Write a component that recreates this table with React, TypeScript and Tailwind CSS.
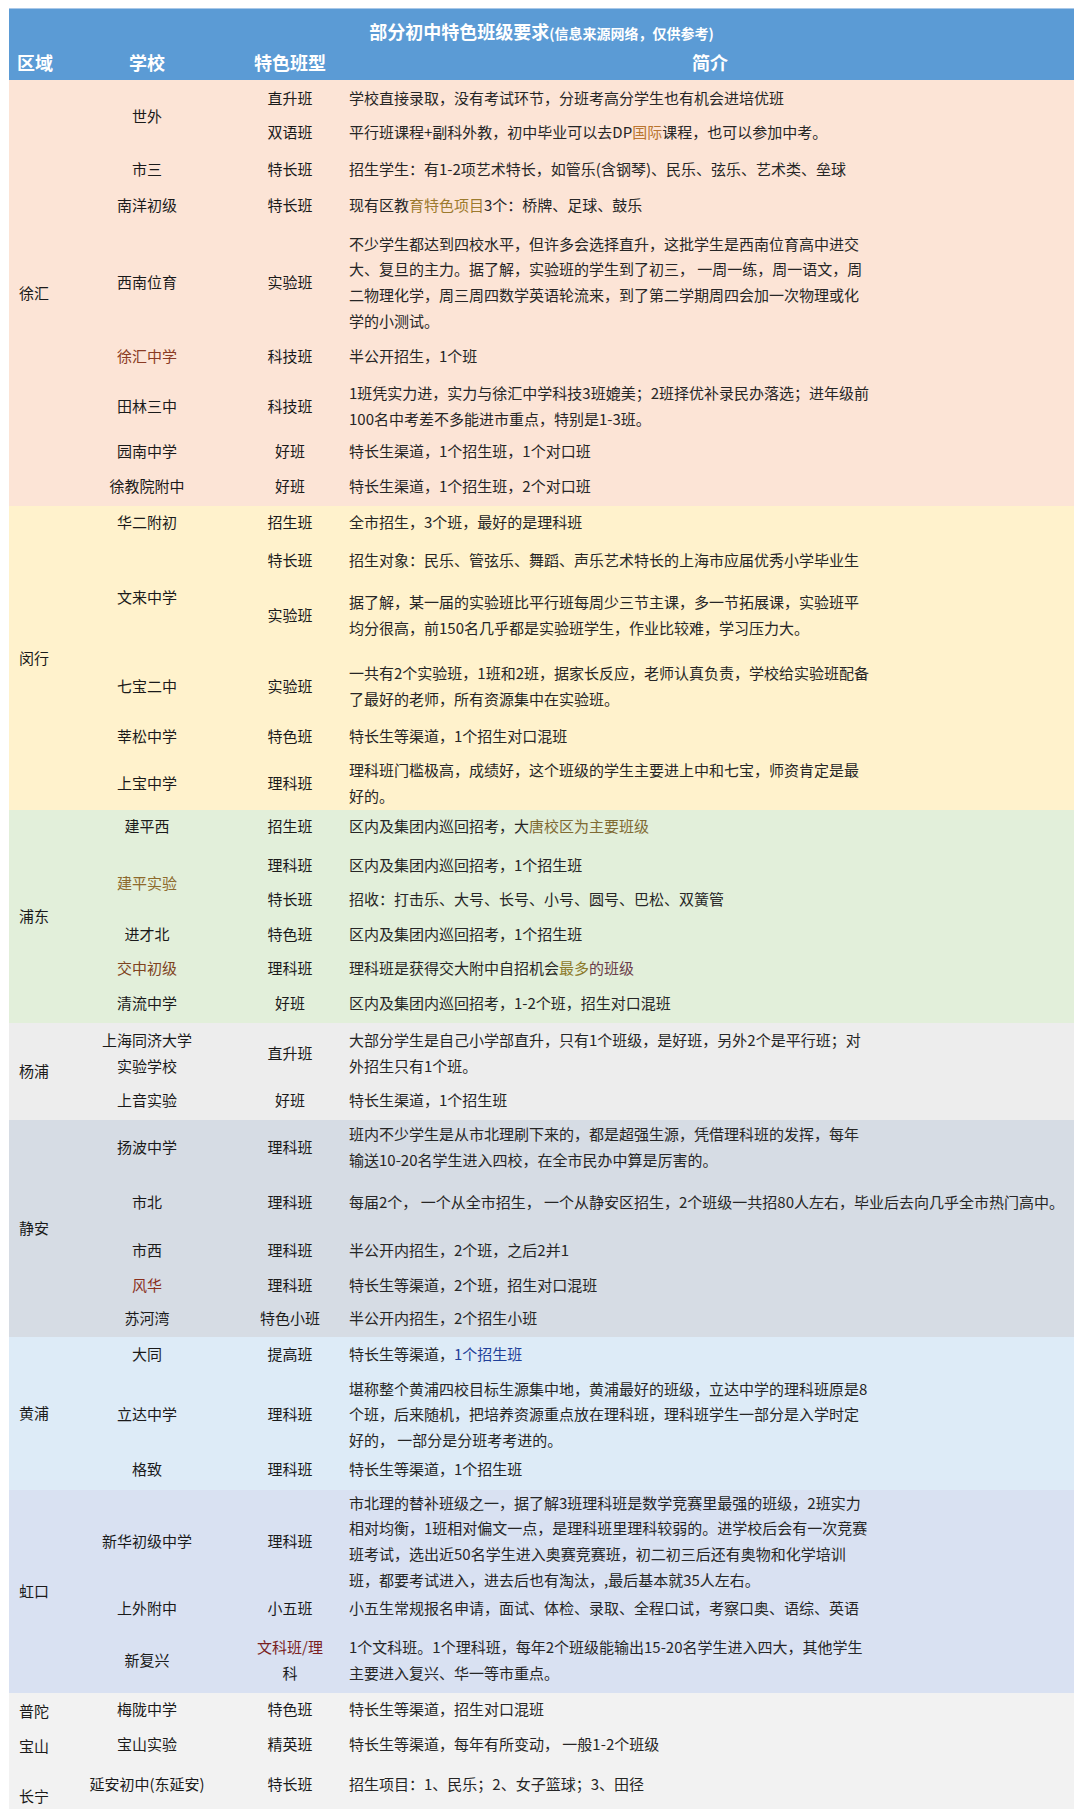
import React from "react";

type Seg = string | { t: string; c: string };
type Line = Seg[];

interface Row {
  h: string;
  s?: { n: string[]; span: number; c?: string };
  t: { n: string[]; c?: string; lines?: Line[] };
  x: Line[];
}

interface Section {
  d: string;
  bg: string;
  dcls?: string;
  rows: Row[];
}

const L = (...segs: Seg[]): Line => segs;

const sections: Section[] = [
  {
    d: "徐汇",
    bg: "bg-[#fce4d6]",
    rows: [
      { h: "h-[36px]", s: { n: ["世外"], span: 2 }, t: { n: ["直升班"] }, x: [L("学校直接录取，没有考试环节，分班考高分学生也有机会进培优班")] },
      { h: "h-[37px]", t: { n: ["双语班"] }, x: [L("平行班课程+副科外教，初中毕业可以去DP", { t: "国际", c: "text-[#b8742f]" }, "课程，也可以参加中考。")] },
      { h: "h-[36px]", s: { n: ["市三"], span: 1 }, t: { n: ["特长班"] }, x: [L("招生学生：有1-2项艺术特长，如管乐(含钢琴)、民乐、弦乐、艺术类、垒球")] },
      { h: "h-[36px]", s: { n: ["南洋初级"], span: 1 }, t: { n: ["特长班"] }, x: [L("现有区教", { t: "育特色项目", c: "text-[#9c7a2e]" }, "3个：桥牌、足球、鼓乐")] },
      {
        h: "h-[115px]",
        s: { n: ["西南位育"], span: 1 },
        t: { n: ["实验班"] },
        x: [
          L("不少学生都达到四校水平，但许多会选择直升，这批学生是西南位育高中进交"),
          L("大、复旦的主力。据了解，实验班的学生到了初三， 一周一练，周一语文，周"),
          L("二物理化学，周三周四数学英语轮流来，到了第二学期周四会加一次物理或化"),
          L("学的小测试。"),
        ],
      },
      { h: "h-[36px]", s: { n: ["徐汇中学"], span: 1, c: "text-[#8a3b24]" }, t: { n: ["科技班"] }, x: [L("半公开招生，1个班")] },
      {
        h: "h-[60px]",
        s: { n: ["田林三中"], span: 1 },
        t: { n: ["科技班"] },
        x: [
          L("1班凭实力进，实力与徐汇中学科技3班媲美；2班择优补录民办落选；进年级前"),
          L("100名中考差不多能进市重点，特别是1-3班。"),
        ],
      },
      { h: "h-[35px]", s: { n: ["园南中学"], span: 1 }, t: { n: ["好班"] }, x: [L("特长生渠道，1个招生班，1个对口班")] },
      { h: "h-[35px]", s: { n: ["徐教院附中"], span: 1 }, t: { n: ["好班"] }, x: [L("特长生渠道，1个招生班，2个对口班")] },
    ],
  },
  {
    d: "闵行",
    bg: "bg-[#fff2cc]",
    rows: [
      { h: "h-[36px]", s: { n: ["华二附初"], span: 1 }, t: { n: ["招生班"] }, x: [L("全市招生，3个班，最好的是理科班")] },
      { h: "h-[36px]", s: { n: ["文来中学"], span: 2 }, t: { n: ["特长班"] }, x: [L("招生对象：民乐、管弦乐、舞蹈、声乐艺术特长的上海市应届优秀小学毕业生")] },
      {
        h: "h-[75px]",
        t: { n: ["实验班"] },
        x: [
          L("据了解，某一届的实验班比平行班每周少三节主课，多一节拓展课，实验班平"),
          L("均分很高，前150名几乎都是实验班学生，作业比较难，学习压力大。"),
        ],
      },
      {
        h: "h-[67px]",
        s: { n: ["七宝二中"], span: 1 },
        t: { n: ["实验班"] },
        x: [
          L("一共有2个实验班，1班和2班，据家长反应，老师认真负责，学校给实验班配备"),
          L("了最好的老师，所有资源集中在实验班。"),
        ],
      },
      { h: "h-[36px]", s: { n: ["莘松中学"], span: 1 }, t: { n: ["特色班"] }, x: [L("特长生等渠道，1个招生对口混班")] },
      {
        h: "h-[54px]",
        s: { n: ["上宝中学"], span: 1 },
        t: { n: ["理科班"] },
        x: [
          L("理科班门槛极高，成绩好，这个班级的学生主要进上中和七宝，师资肯定是最"),
          L("好的。"),
        ],
      },
    ],
  },
  {
    d: "浦东",
    bg: "bg-[#e2efda]",
    rows: [
      { h: "h-[37px]", s: { n: ["建平西"], span: 1 }, t: { n: ["招生班"] }, x: [L("区内及集团内巡回招考，大", { t: "唐校区为主要班级", c: "text-[#7f6a32]" })] },
      { h: "h-[36px]", s: { n: ["建平实验"], span: 2, c: "text-[#8d6a2c]" }, t: { n: ["理科班"] }, x: [L("区内及集团内巡回招考，1个招生班")] },
      { h: "h-[36px]", t: { n: ["特长班"] }, x: [L("招收：打击乐、大号、长号、小号、圆号、巴松、双簧管")] },
      { h: "h-[34px]", s: { n: ["进才北"], span: 1 }, t: { n: ["特色班"] }, x: [L("区内及集团内巡回招考，1个招生班")] },
      {
        h: "h-[34px]",
        s: { n: ["交中初级"], span: 1, c: "text-[#7e4320]" },
        t: { n: ["理科班"] },
        x: [L("理科班是获得交大附中自招机会", { t: "最多", c: "text-[#8c7a2a]" }, { t: "的班级", c: "text-[#6b3d4a]" })],
      },
      { h: "h-[36px]", s: { n: ["清流中学"], span: 1 }, t: { n: ["好班"] }, x: [L("区内及集团内巡回招考，1-2个班，招生对口混班")] },
    ],
  },
  {
    d: "杨浦",
    bg: "bg-[#ededed]",
    rows: [
      {
        h: "h-[61px]",
        s: { n: ["上海同济大学", "实验学校"], span: 1 },
        t: { n: ["直升班"] },
        x: [
          L("大部分学生是自己小学部直升，只有1个班级，是好班，另外2个是平行班；对"),
          L("外招生只有1个班。"),
        ],
      },
      { h: "h-[36px]", s: { n: ["上音实验"], span: 1 }, t: { n: ["好班"] }, x: [L("特长生渠道，1个招生班")] },
    ],
  },
  {
    d: "静安",
    bg: "bg-[#d6dce4]",
    rows: [
      {
        h: "h-[54px]",
        s: { n: ["扬波中学"], span: 1 },
        t: { n: ["理科班"] },
        x: [
          L("班内不少学生是从市北理刷下来的，都是超强生源，凭借理科班的发挥，每年"),
          L("输送10-20名学生进入四校，在全市民办中算是厉害的。"),
        ],
      },
      {
        h: "h-[60px]",
        s: { n: ["市北"], span: 1 },
        t: { n: ["理科班"] },
        x: [L("每届2个， 一个从全市招生， 一个从静安区招生，2个班级一共招80人左右，毕业后去向几乎全市热门高中。")],
      },
      { h: "h-[36px]", s: { n: ["市西"], span: 1 }, t: { n: ["理科班"] }, x: [L("半公开内招生，2个班，之后2并1")] },
      { h: "h-[34px]", s: { n: ["风华"], span: 1, c: "text-[#8a2f1c]" }, t: { n: ["理科班"] }, x: [L("特长生等渠道，2个班，招生对口混班")] },
      { h: "h-[33px]", s: { n: ["苏河湾"], span: 1 }, t: { n: ["特色小班"] }, x: [L("半公开内招生，2个招生小班")] },
    ],
  },
  {
    d: "黄浦",
    bg: "bg-[#ddebf7]",
    rows: [
      { h: "h-[39px]", s: { n: ["大同"], span: 1 }, t: { n: ["提高班"] }, x: [L("特长生等渠道，", { t: "1个招生班", c: "text-[#1f3f99]" })] },
      {
        h: "h-[75px]",
        s: { n: ["立达中学"], span: 1 },
        t: { n: ["理科班"] },
        x: [
          L("堪称整个黄浦四校目标生源集中地，黄浦最好的班级，立达中学的理科班原是8"),
          L("个班，后来随机，把培养资源重点放在理科班，理科班学生一部分是入学时定"),
          L("好的， 一部分是分班考考进的。"),
        ],
      },
      { h: "h-[37px]", s: { n: ["格致"], span: 1 }, t: { n: ["理科班"] }, x: [L("特长生等渠道，1个招生班")] },
    ],
  },
  {
    d: "虹口",
    bg: "bg-[#d9e1f2]",
    rows: [
      {
        h: "h-[103px]",
        s: { n: ["新华初级中学"], span: 1 },
        t: { n: ["理科班"] },
        x: [
          L("市北理的替补班级之一，据了解3班理科班是数学竞赛里最强的班级，2班实力"),
          L("相对均衡，1班相对偏文一点，是理科班里理科较弱的。进学校后会有一次竞赛"),
          L("班考试，选出近50名学生进入奥赛竞赛班，初二初三后还有奥物和化学培训"),
          L("班，都要考试进入，进去后也有淘汰，,最后基本就35人左右。"),
        ],
      },
      { h: "h-[34px]", s: { n: ["上外附中"], span: 1 }, t: { n: ["小五班"] }, x: [L("小五生常规报名申请，面试、体检、录取、全程口试，考察口奥、语综、英语")] },
      {
        h: "h-[66px]",
        s: { n: ["新复兴"], span: 1 },
        t: { n: [], lines: [L({ t: "文科班/理", c: "text-[#7a1f1f]" }), L("科")] },
        x: [
          L("1个文科班。1个理科班，每年2个班级能输出15-20名学生进入四大，其他学生"),
          L("主要进入复兴、华一等市重点。"),
        ],
      },
    ],
  },
  {
    d: "普陀",
    bg: "bg-[#f2f2f2]",
    rows: [{ h: "h-[36px]", s: { n: ["梅陇中学"], span: 1 }, t: { n: ["特色班"] }, x: [L("特长生等渠道，招生对口混班")] }],
  },
  {
    d: "宝山",
    bg: "bg-[#f2f2f2]",
    rows: [{ h: "h-[34px]", s: { n: ["宝山实验"], span: 1 }, t: { n: ["精英班"] }, x: [L("特长生等渠道，每年有所变动， 一般1-2个班级")] }],
  },
  {
    d: "长宁",
    bg: "bg-[#f2f2f2]",
    dcls: "pt-[20px]",
    rows: [{ h: "h-[46px]", s: { n: ["延安初中(东延安)"], span: 1 }, t: { n: ["特长班"] }, x: [L("招生项目：1、民乐；2、女子篮球；3、田径")] }],
  },
];

function LineView({ line }: { line: Line }) {
  return (
    <div className="whitespace-nowrap leading-[25.7px]">
      {line.map((s, i) =>
        typeof s === "string" ? (
          <React.Fragment key={i}>{s}</React.Fragment>
        ) : (
          <span key={i} className={s.c}>
            {s.t}
          </span>
        )
      )}
    </div>
  );
}

function isSingle(r: Row) {
  const typeLines = r.t.lines ? r.t.lines.length : r.t.n.length;
  const schoolLines = r.s ? r.s.n.length : 1;
  const span = r.s ? r.s.span : 1;
  return r.x.length === 1 && typeLines === 1 && schoolLines === 1 && span === 1;
}

export default function App() {
  return (
    <div className="w-[1080px] min-h-[1820px] bg-white pt-[8px] font-['Noto_Sans_CJK_SC','Noto_Sans',sans-serif] text-[15px] text-[#262626]">
      <table className="ml-[9px] w-[1065px] table-fixed border-collapse">
        <colgroup>
          <col className="w-[51px]" />
          <col className="w-[174px]" />
          <col className="w-[112px]" />
          <col />
        </colgroup>
        <thead>
          <tr className="h-[42px] bg-[#5b9bd5]">
            <td colSpan={4} className="border-t border-[#a9c8e8] pt-[10px] align-top text-center leading-[24px] font-bold text-white">
              <span className="text-[18px]">部分初中特色班级要求</span>
              <span className="text-[14px]">(信息来源网络，仅供参考)</span>
            </td>
          </tr>
          <tr className="h-[29px] bg-[#5b9bd5] text-[18px] font-bold text-white">
            <td className="pl-[8px] pb-[7px] align-middle leading-[22px] whitespace-nowrap">区域</td>
            <td className="pb-[7px] text-center align-middle leading-[22px]">学校</td>
            <td className="pb-[7px] text-center align-middle leading-[22px]">特色班型</td>
            <td className="pb-[7px] text-center align-middle leading-[22px]">简介</td>
          </tr>
        </thead>
        <tbody>
          {sections.map((sec) =>
            sec.rows.map((r, ri) => {
              const pb = isSingle(r) ? "pb-[4px]" : "";
              return (
                <tr key={sec.d + ri} className={`${r.h} ${sec.bg}`}>
                  {ri === 0 && (
                    <td rowSpan={sec.rows.length} className={`pl-[10px] align-middle leading-[25.7px] whitespace-nowrap text-[#1a1a1a] ${sec.dcls ?? ""}`}>
                      {sec.d}
                    </td>
                  )}
                  {r.s && (
                    <td rowSpan={r.s.span} className={`${pb} text-center align-middle leading-[25.7px] ${r.s.c ?? "text-[#1a1a1a]"}`}>
                      {r.s.n.map((n, i) => (
                        <div key={i} className="whitespace-nowrap">
                          {n}
                        </div>
                      ))}
                    </td>
                  )}
                  <td className={`${pb} text-center align-middle leading-[25.7px] text-[#1a1a1a]`}>
                    {r.t.lines
                      ? r.t.lines.map((l, i) => <LineView key={i} line={l} />)
                      : r.t.n.map((n, i) => (
                          <div key={i} className="whitespace-nowrap">
                            {n}
                          </div>
                        ))}
                  </td>
                  <td className={`${pb} pl-[3px] align-middle`}>
                    {r.x.map((l, i) => (
                      <LineView key={i} line={l} />
                    ))}
                  </td>
                </tr>
              );
            })
          )}
        </tbody>
      </table>
    </div>
  );
}
